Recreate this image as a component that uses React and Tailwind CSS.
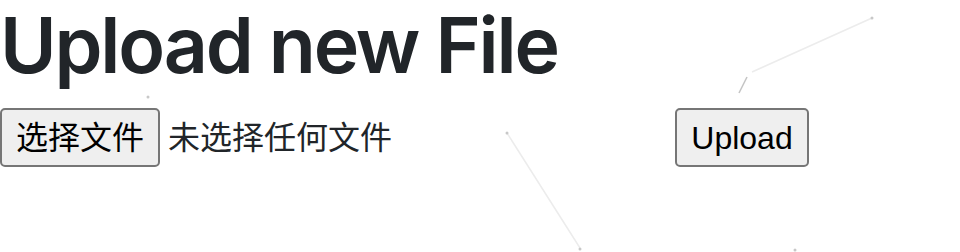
import React from "react";

function Particles() {
    return (
        <svg className="pointer-events-none absolute inset-0" width="960" height="252" viewBox="0 0 960 252">
            <g stroke="#ececec" strokeWidth="1.5">
                <line x1="752" y1="72" x2="872" y2="18" />
                <line x1="507" y1="133" x2="580" y2="248" />
            </g>
            <line x1="747" y1="77" x2="739" y2="93" stroke="#c4c4c4" strokeWidth="1.5" />
            <g fill="#c8c8c8">
                <circle cx="872" cy="18" r="1.5" />
                <circle cx="507" cy="133" r="1.5" />
                <circle cx="148" cy="97" r="1.5" />
                <circle cx="795" cy="250" r="1.5" />
                <circle cx="580" cy="249" r="1.5" />
            </g>
        </svg>
    );
}

export default function App() {
    return (
        <div className="relative h-[252px] w-[960px] overflow-hidden bg-white">
            <Particles />

            <div className="relative">
                {/* Title */}
                <h1 className="text-[77px] leading-[90px] font-semibold tracking-[-2.2px] text-[#212529] font-['Inter','Liberation_Sans',sans-serif]">
                    Upload new File
                </h1>

                {/* Form */}
                <form className="mt-[18px] flex items-center" onSubmit={(e) => e.preventDefault()}>
                    <div className="flex w-[675px] items-center gap-2 font-['Liberation_Sans','Noto_Sans_CJK_SC',sans-serif]">
                        <button
                            type="button"
                            className="h-[59px] w-[160px] rounded-[5px] border-2 border-[#767676] bg-[#efefef] text-[32px] leading-none text-black"
                        >
                            选择文件
                        </button>
                        <span className="text-[32px] leading-none text-[#212529]">未选择任何文件</span>
                    </div>
                    <button
                        type="submit"
                        className="h-[59px] w-[134px] rounded-[5px] border-2 border-[#767676] bg-[#efefef] text-[32px] leading-none text-black font-['Liberation_Sans',Arial,sans-serif]"
                    >
                        Upload
                    </button>
                </form>
            </div>
        </div>
    );
}
